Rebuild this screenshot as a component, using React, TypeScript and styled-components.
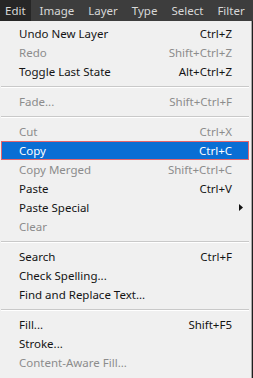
import styled, { createGlobalStyle } from "styled-components";

const GlobalStyle = createGlobalStyle`
  html, body {
    margin: 0;
    padding: 0;
    background: #f0f0f0;
  }
  body {
    font-family: "Noto Sans", "Open Sans", sans-serif;
  }
`;

type Entry =
  | { kind: "sep" }
  | { kind: "item"; label: string; shortcut?: string; disabled?: boolean; active?: boolean; submenu?: boolean };

const entries: Entry[] = [
  { kind: "item", label: "Undo New Layer", shortcut: "Ctrl+Z" },
  { kind: "item", label: "Redo", shortcut: "Shift+Ctrl+Z", disabled: true },
  { kind: "item", label: "Toggle Last State", shortcut: "Alt+Ctrl+Z" },
  { kind: "sep" },
  { kind: "item", label: "Fade...", shortcut: "Shift+Ctrl+F", disabled: true },
  { kind: "sep" },
  { kind: "item", label: "Cut", shortcut: "Ctrl+X", disabled: true },
  { kind: "item", label: "Copy", shortcut: "Ctrl+C", active: true },
  { kind: "item", label: "Copy Merged", shortcut: "Shift+Ctrl+C", disabled: true },
  { kind: "item", label: "Paste", shortcut: "Ctrl+V" },
  { kind: "item", label: "Paste Special", submenu: true },
  { kind: "item", label: "Clear", disabled: true },
  { kind: "sep" },
  { kind: "item", label: "Search", shortcut: "Ctrl+F" },
  { kind: "item", label: "Check Spelling..." },
  { kind: "item", label: "Find and Replace Text..." },
  { kind: "sep" },
  { kind: "item", label: "Fill...", shortcut: "Shift+F5" },
  { kind: "item", label: "Stroke..." },
  { kind: "item", label: "Content-Aware Fill...", disabled: true },
];

const topMenus = ["Edit", "Image", "Layer", "Type", "Select", "Filter"];

export default function App() {
  return (
    <>
      <GlobalStyle />
      <Screen>
        <MenuBar>
          {topMenus.map((m, i) => (
            <TopItem key={m} $open={i === 0}>
              {m}
            </TopItem>
          ))}
        </MenuBar>
        <Dropdown>
          {entries.map((e, i) =>
            e.kind === "sep" ? (
              <Separator key={i} />
            ) : (
              <Row key={i} $disabled={e.disabled} $active={e.active}>
                <span className="label">{e.label}</span>
                {e.shortcut && <span className="shortcut">{e.shortcut}</span>}
                {e.submenu && (
                  <Arrow viewBox="0 0 4 7">
                    <path d="M0 0 L4 3.5 L0 7 Z" fill="#111" />
                  </Arrow>
                )}
              </Row>
            )
          )}
        </Dropdown>
      </Screen>
    </>
  );
}

const Screen = styled.div`
  width: 253px;
  height: 378px;
  display: flex;
  flex-direction: column;
  overflow: hidden;
`;

const MenuBar = styled.div`
  height: 21px;
  flex-shrink: 0;
  background: #3d3d3d;
  display: flex;
  align-items: stretch;
  gap: 4px;
`;

const TopItem = styled.div<{ $open?: boolean }>`
  display: flex;
  align-items: center;
  padding: 0 5px 0 5px;
  font-size: 11.5px;
  color: #d8d8d8;
  white-space: nowrap;
  background: ${(p) => (p.$open ? "#262626" : "transparent")};
`;

const Dropdown = styled.div`
  flex: 1;
  background: #f0f0f0;
  padding-top: 3px;
  border-right: 1px solid #1e1e1e;
  box-shadow: inset -1px 0 0 #a8a8a8;
  display: flex;
  flex-direction: column;
`;

const Row = styled.div<{ $disabled?: boolean; $active?: boolean }>`
  height: 19px;
  margin: 0 3px 0 1px;
  padding: 0 16px 0 17px;
  box-sizing: border-box;
  display: flex;
  align-items: center;
  justify-content: space-between;
  font-size: 11.5px;
  color: ${(p) => (p.$active ? "#ffffff" : p.$disabled ? "#8c8c8c" : "#141414")};
  background: ${(p) => (p.$active ? "#0a6ed4" : "transparent")};
  border: 1px solid ${(p) => (p.$active ? "#e4646c" : "transparent")};
  position: relative;

  .label {
    white-space: nowrap;
  }

  .shortcut {
    white-space: nowrap;
  }
`;

const Arrow = styled.svg`
  position: absolute;
  right: 5px;
  top: 5px;
  width: 4px;
  height: 7px;
`;

const Separator = styled.div`
  height: 11px;
  display: flex;
  align-items: center;
  margin: 0 3px 0 1px;

  &::before {
    content: "";
    flex: 1;
    height: 1px;
    background: #c9c9c9;
    box-shadow: 0 1px 0 #ffffff;
  }
`;
